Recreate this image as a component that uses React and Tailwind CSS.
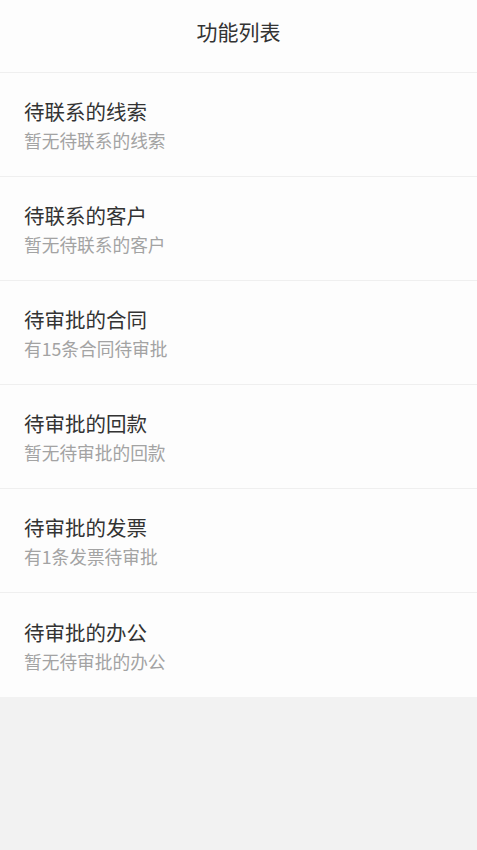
export default function App() {
  const items = [
    ["待联系的线索", "暂无待联系的线索"],
    ["待联系的客户", "暂无待联系的客户"],
    ["待审批的合同", "有15条合同待审批"],
    ["待审批的回款", "暂无待审批的回款"],
    ["待审批的发票", "有1条发票待审批"],
    ["待审批的办公", "暂无待审批的办公"],
  ];
  return (
    <div
      className="min-h-[850px] w-full bg-[#f2f2f2]"
      style={{ fontFamily: '"Noto Sans CJK SC", "Noto Sans", sans-serif' }}
    >
      <div className="flex h-[73px] justify-center border-b border-[#efefef] bg-[#fdfdfd] pt-[17px]">
        <span className="text-[21px] leading-[28px] text-[#333333]">功能列表</span>
      </div>
      {items.map(([t, s], i) => (
        <div
          key={i}
          className={`flex h-[104px] flex-col justify-center bg-[#fdfdfd] pl-6 ${i < items.length - 1 ? "border-b border-[#efefef]" : ""}`}
        >
          <div className="text-[20.5px] leading-[28px] text-[#333333]">{t}</div>
          <div className="mt-[3px] text-[17.7px] leading-[24px] text-[#a3a3a3]">{s}</div>
        </div>
      ))}
    </div>
  );
}
